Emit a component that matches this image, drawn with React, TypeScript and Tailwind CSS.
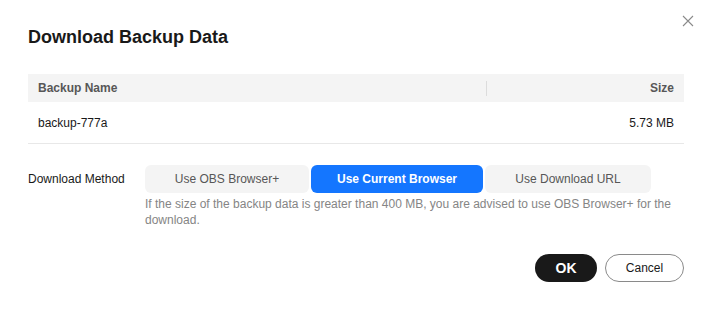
import { useState } from "react";

const METHODS = [
  { id: "obs", label: "Use OBS Browser+", width: "w-[164px]" },
  { id: "current", label: "Use Current Browser", width: "w-[172px]" },
  { id: "url", label: "Use Download URL", width: "w-[166px]" },
];

export default function App() {
  const [method, setMethod] = useState("current");

  return (
    <div className="relative h-[310px] w-[707px] bg-white font-['Liberation_Sans',Arial,sans-serif] text-[#191919]">
      {/* close */}
      <button className="absolute right-[13px] top-[15px] flex h-3 w-3 items-center justify-center text-[#8a8a8a]">
        <svg width="12" height="12" viewBox="0 0 12 12" fill="none" stroke="currentColor" strokeWidth="1.1">
          <path d="M1 1l10 10M11 1L1 11" />
        </svg>
      </button>

      <div className="pl-[28px] pr-[23px] pt-[26px]">
        <h2 className="text-[18px] font-bold leading-[22px]">Download Backup Data</h2>

        {/* table */}
        <div className="mt-[26px] text-[12px]">
          <div className="flex h-[28px] items-center bg-[#f4f4f4] font-bold text-[#575757]">
            <div className="flex-1 pl-[10px]">Backup Name</div>
            <div className="h-[15px] w-px bg-[#dcdcdc]" />
            <div className="w-[197px] pr-[10px] text-right">Size</div>
          </div>
          <div className="flex h-[42px] items-center border-b border-[#e8e8e8]">
            <div className="flex-1 pl-[10px]">backup-777a</div>
            <div className="w-[198px] pr-[10px] text-right">5.73 MB</div>
          </div>
        </div>

        {/* method */}
        <div className="mt-[21px] flex text-[12px]">
          <div className="w-[117px] leading-[28px]">Download Method</div>
          <div className="flex-1">
            <div className="flex gap-[2px]">
              {METHODS.map((m) =>
                m.id === method ? (
                  <button
                    key={m.id}
                    onClick={() => setMethod(m.id)}
                    className={`${m.width} h-[28px] rounded-[6px] bg-[#1476ff] font-bold text-white`}
                  >
                    {m.label}
                  </button>
                ) : (
                  <button
                    key={m.id}
                    onClick={() => setMethod(m.id)}
                    className={`${m.width} h-[28px] rounded-[6px] bg-[#f4f4f4] text-[#575757]`}
                  >
                    {m.label}
                  </button>
                )
              )}
            </div>
            <p className="mt-[3px] leading-[16px] text-[#858585]">
              If the size of the backup data is greater than 400 MB, you are advised to use OBS Browser+ for the
              download.
            </p>
          </div>
        </div>

        {/* footer */}
        <div className="mt-[26px] flex justify-end gap-[8px]">
          <button className="h-[28px] w-[62px] rounded-full bg-[#191919] text-[14px] font-bold text-white">OK</button>
          <button className="h-[28px] w-[79px] rounded-full border border-[#8a8a8a] text-[12px] text-[#191919]">
            Cancel
          </button>
        </div>
      </div>
    </div>
  );
}
